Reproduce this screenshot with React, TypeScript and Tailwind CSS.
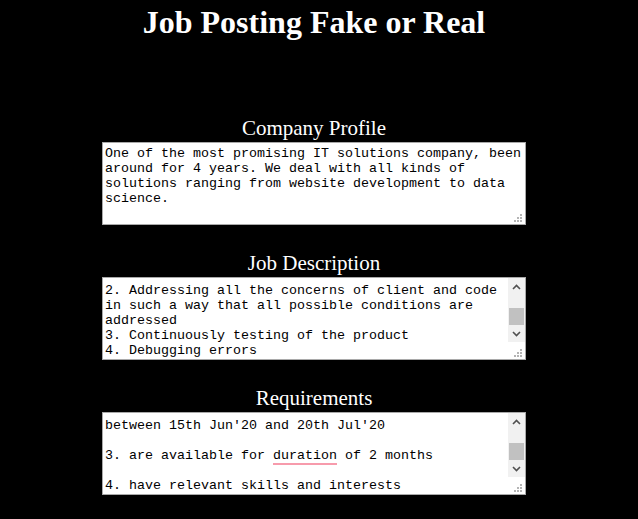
import { useEffect, useRef } from "react";

const profile =
  "One of the most promising IT solutions company, been around for 4 years. We deal with all kinds of solutions ranging from website development to data science.";

const description = [
  "Selected intern's day-to-day responsibilities include:",
  "",
  "1. Working on the front end of the website",
  "",
  "2. Addressing all the concerns of client and code in such a way that all possible conditions are addressed",
  "3. Continuously testing of the product",
  "4. Debugging errors",
].join("\n");

const requirements = [
  "Only those candidates can apply who:",
  "",
  "1. are available for full time internship",
  "",
  "2. can start the work from home job/internship between 15th Jun'20 and 20th Jul'20",
  "",
  "3. are available for duration of 2 months",
  "",
  "4. have relevant skills and interests",
].join("\n");

// little dotted grip in the bottom-right corner
function Grip() {
  return (
    <svg
      className="absolute right-[3px] bottom-[2px] pointer-events-none"
      width="9"
      height="9"
      viewBox="0 0 9 9"
    >
      <g fill="#b4b4b4">
        <rect x="6" y="0" width="2" height="2" />
        <rect x="3" y="3" width="2" height="2" />
        <rect x="6" y="3" width="2" height="2" />
        <rect x="0" y="6" width="2" height="2" />
        <rect x="3" y="6" width="2" height="2" />
        <rect x="6" y="6" width="2" height="2" />
      </g>
    </svg>
  );
}

// classic scrollbar drawn over the textarea, thumb at the bottom of the track
function Scrollbar() {
  return (
    <div className="absolute right-[1px] top-[1px] w-[17px] h-[64px] bg-[#f1f1f1] flex flex-col pointer-events-none">
      <div className="h-[17px] flex items-center justify-center">
        <svg width="9" height="6" viewBox="0 0 9 6">
          <path d="M1 5 L4.5 1.5 L8 5" fill="none" stroke="#505050" strokeWidth="1.6" />
        </svg>
      </div>
      <div className="flex-1 flex flex-col justify-end">
        <div className="h-[17px] mx-[1px] bg-[#c1c1c1]" />
      </div>
      <div className="h-[17px] flex items-center justify-center">
        <svg width="9" height="6" viewBox="0 0 9 6">
          <path d="M1 1 L4.5 4.5 L8 1" fill="none" stroke="#505050" strokeWidth="1.6" />
        </svg>
      </div>
    </div>
  );
}

function Field({
  label,
  value,
  scrolled,
  children,
}: {
  label: string;
  value: string;
  scrolled?: boolean;
  children?: React.ReactNode;
}) {
  const ref = useRef<HTMLTextAreaElement>(null);

  useEffect(() => {
    if (scrolled && ref.current) ref.current.scrollTop = 72;
  }, [scrolled]);

  return (
    <div className="flex flex-col items-center">
      <label className="h-[24px] mb-[2px] text-[21px] leading-[24px] text-white font-['Liberation_Serif',serif]">
        {label}
      </label>
      <div className="relative">
        <textarea
          ref={ref}
          defaultValue={value}
          spellCheck={false}
          className={`block w-[424px] h-[83px] border border-[#a9a9a9] bg-white text-black text-[13.333px] leading-[15px] font-['Liberation_Mono',monospace] outline-none resize-none [scrollbar-width:none] ${
            scrolled ? "p-[2px] pr-[19px]" : "px-[2px] pt-[3px] pb-[1px]"
          }`}
        />
        {scrolled && (
          <span className="absolute left-[1px] top-[1px] right-[18px] h-[5px] bg-white pointer-events-none" />
        )}
        {scrolled && <Scrollbar />}
        <Grip />
        {children}
      </div>
    </div>
  );
}

export default function App() {
  return (
    <div className="min-h-screen bg-black">
      <div className="w-[628px] flex flex-col items-center">
        <h1 className="mt-[4px] text-[32px] leading-[37px] font-bold text-white font-['Liberation_Serif',serif]">
          Job Posting Fake or Real
        </h1>

        <div className="mt-[75px] flex flex-col gap-[26px]">
          <Field label="Company Profile" value={profile} />
          <Field label="Job Description" value={description} scrolled />
          <Field label="Requirements" value={requirements} scrolled>
            {/* spelling marker under "duration" */}
            <span className="absolute left-[171px] top-[51px] w-[64px] h-[2px] bg-[#f79bac] pointer-events-none" />
          </Field>
        </div>
      </div>
    </div>
  );
}
